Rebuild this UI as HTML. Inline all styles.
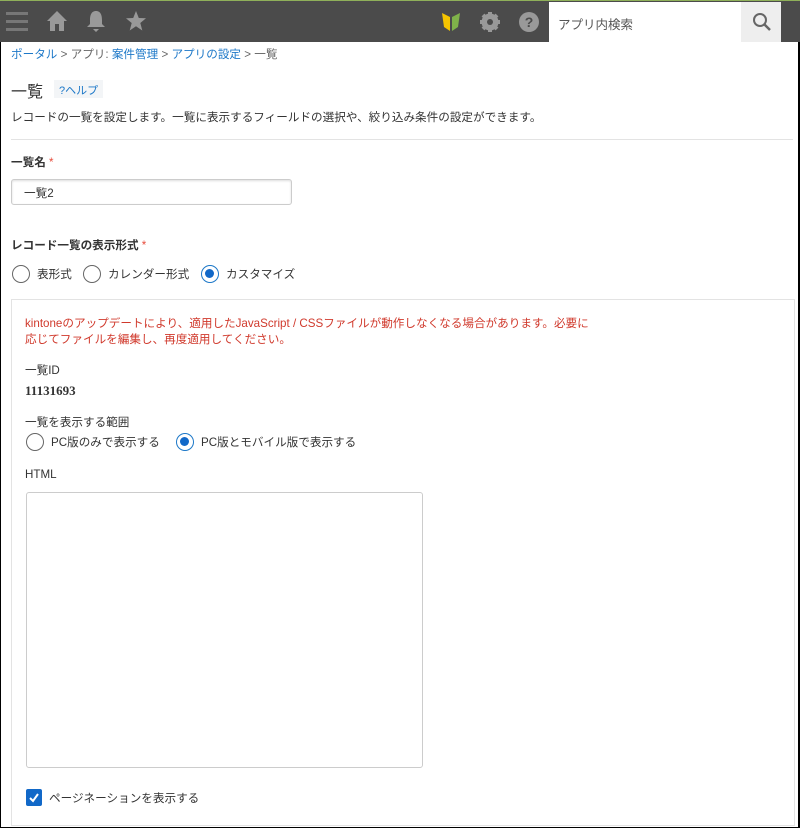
<!DOCTYPE html>
<html><head><meta charset="utf-8"><style>
*{box-sizing:border-box;margin:0;padding:0}
body{width:800px;height:828px;overflow:hidden;background:#fff;font-family:"Liberation Sans","Noto Sans CJK JP",sans-serif;font-size:11.6px;color:#333;position:relative;border:1px solid #000;border-right-width:2px}
.hdr{position:absolute;left:-1px;top:-1px;width:800px;height:42px;background:#4b4b4b;border-top:1px solid #8fb05a}
.abs{position:absolute}
.search{position:absolute;left:549px;top:1px;width:192px;height:40px;background:#fff;font-size:12.5px;color:#555;padding:12px 0 0 9px}
.sbtn{position:absolute;left:741px;top:1px;width:40px;height:40px;background:#eee}
a{color:#1d78c8;text-decoration:none}
.c{position:absolute;left:-1px;top:-2px;width:800px;height:830px}
.txt{position:absolute;white-space:nowrap}
.radio{position:absolute;width:18px;height:18px;border:1.5px solid #666;border-radius:50%;background:#fff}
.radio.on{border-color:#1d78c8}
.radio.on::after{content:"";position:absolute;left:3px;top:3px;width:9px;height:9px;border-radius:50%;background:#1168c8}
</style></head><body>
<div class="hdr">
 <svg class="abs" style="left:6px;top:9px" width="22" height="22"><rect y="2" width="22" height="3" fill="#777"/><rect y="10" width="22" height="3" fill="#777"/><rect y="18" width="22" height="3" fill="#777"/></svg>
 <svg class="abs" style="left:46px;top:9px" width="22" height="22"><path d="M11 1 L21 11 L18 11 L18 21 L13 21 L13 14 L9 14 L9 21 L4 21 L4 11 L1 11 Z" fill="#999"/></svg>
 <svg class="abs" style="left:86px;top:8px" width="20" height="24"><path d="M10 2 C5 2 4 7 4 11 L4 15 L1 18 L19 18 L16 15 L16 11 C16 7 15 2 10 2Z M7 20 L13 20 L10 23Z" fill="#999"/></svg>
 <svg class="abs" style="left:125px;top:9px" width="22" height="22"><path d="M11 1 L13.8 8 L21 8.3 L15.3 13 L17.3 20.5 L11 16.3 L4.7 20.5 L6.7 13 L1 8.3 L8.2 8Z" fill="#999"/></svg>
 <svg class="abs" style="left:441px;top:10px" width="20" height="22"><path d="M1 2 L9 6 L9 20 L3 16 Z" fill="#f5c400"/><path d="M19 2 L11 6 L11 20 L17 16 Z" fill="#7fb24a"/></svg>
 <svg class="abs" style="left:479px;top:10px" width="22" height="22" viewBox="0 0 22 22"><circle cx="11" cy="11" r="6.5" fill="none" stroke="#999" stroke-width="4"/><g stroke="#999" stroke-width="4"><line x1="11" y1="1" x2="11" y2="21"/><line x1="1" y1="11" x2="21" y2="11"/><line x1="4" y1="4" x2="18" y2="18"/><line x1="18" y1="4" x2="4" y2="18"/></g><circle cx="11" cy="11" r="3" fill="#4b4b4b"/></svg>
 <svg class="abs" style="left:518px;top:10px" width="22" height="22"><circle cx="11" cy="11" r="10" fill="#999"/><text x="11" y="16" font-size="14" font-weight="bold" fill="#4b4b4b" text-anchor="middle" font-family="Liberation Sans">?</text></svg>
 <div class="search">アプリ内検索</div>
 <div class="sbtn"><svg style="position:absolute;left:11px;top:10px" width="20" height="20"><circle cx="8" cy="8" r="6" fill="none" stroke="#666" stroke-width="2"/><line x1="12.5" y1="12.5" x2="18" y2="18" stroke="#666" stroke-width="2.5"/></svg></div>
</div>
<div class="c">
<div class="txt" style="left:11px;top:47px;color:#666"><a>ポータル</a> &gt; アプリ: <a>案件管理</a> &gt; <a>アプリの設定</a> &gt; 一覧</div>
<div class="txt" style="left:11px;top:79px;font-size:16px;color:#333">一覧</div>
<div class="abs" style="left:54px;top:81px;height:18px;background:#f3f5f7;padding:2px 5px;font-size:11px;color:#1d78c8">?ヘルプ</div>
<div class="txt" style="left:11px;top:110px">レコードの一覧を設定します。一覧に表示するフィールドの選択や、絞り込み条件の設定ができます。</div>
<div class="abs" style="left:11px;top:140px;width:782px;height:1px;background:#e3e3e3"></div>
<div class="txt" style="left:11px;top:155px;font-weight:bold">一覧名 <span style="color:#e74c3c;font-weight:normal">*</span></div>
<div class="abs" style="left:11px;top:180px;width:281px;height:26px;border:1px solid #ccc;border-radius:3px;box-shadow:inset 0 1px 2px #ddd;padding:5px 12px">一覧2</div>
<div class="txt" style="left:11px;top:238px;font-weight:bold">レコード一覧の表示形式 <span style="color:#e74c3c;font-weight:normal">*</span></div>
<div class="radio" style="left:12px;top:266px"></div><div class="txt" style="left:37px;top:267px">表形式</div>
<div class="radio" style="left:83px;top:266px"></div><div class="txt" style="left:108px;top:267px">カレンダー形式</div>
<div class="radio on" style="left:201px;top:266px"></div><div class="txt" style="left:226px;top:267px">カスタマイズ</div>
<div class="abs" style="left:11px;top:300px;width:784px;height:527px;border:1px solid #e3e3e3"></div>
<div class="txt" style="left:25px;top:317px;color:#d0392c;line-height:16px">kintoneのアップデートにより、適用したJavaScript / CSSファイルが動作しなくなる場合があります。必要に<br>応じてファイルを編集し、再度適用してください。</div>
<div class="txt" style="left:25px;top:363px">一覧ID</div>
<div class="txt" style="left:25px;top:384px;font-weight:bold;font-family:'Liberation Serif',serif;font-size:13px">11131693</div>
<div class="txt" style="left:25px;top:415px">一覧を表示する範囲</div>
<div class="radio" style="left:26px;top:434px"></div><div class="txt" style="left:51px;top:435px">PC版のみで表示する</div>
<div class="radio on" style="left:176px;top:434px"></div><div class="txt" style="left:201px;top:435px">PC版とモバイル版で表示する</div>
<div class="txt" style="left:25px;top:469px">HTML</div>
<div class="abs" style="left:26px;top:493px;width:397px;height:276px;border:1px solid #ccc;border-radius:3px"></div>
<div class="abs" style="left:26px;top:790px;width:16px;height:17px;background:#1168c8;border-radius:2px"><svg width="16" height="17"><path d="M4 9 L7 12 L12 5" fill="none" stroke="#fff" stroke-width="2"/></svg></div>
<div class="txt" style="left:49px;top:791px">ページネーションを表示する</div>
</div>
</body></html>
